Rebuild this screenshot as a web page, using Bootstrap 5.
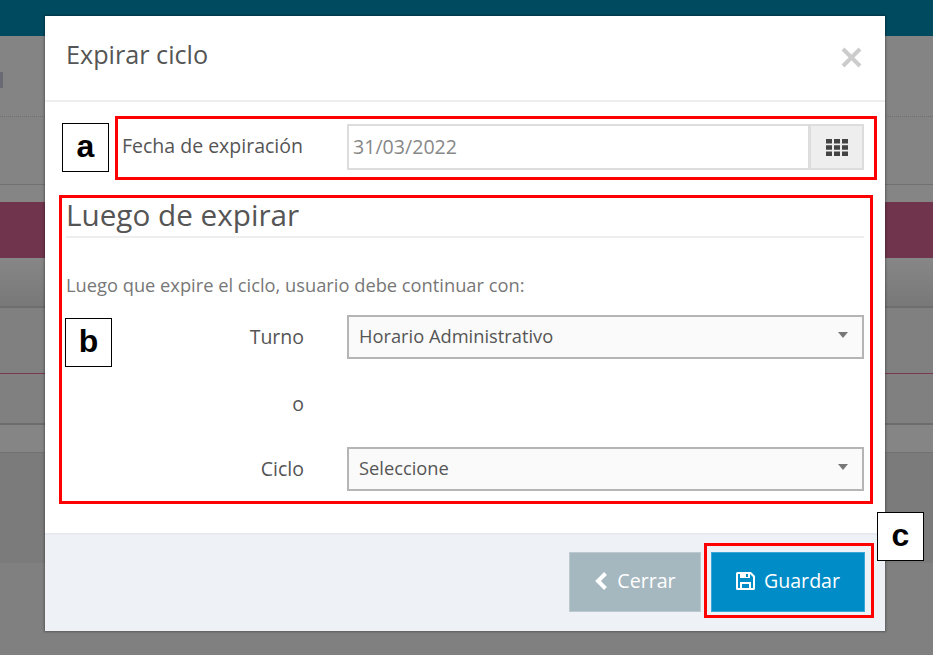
<!DOCTYPE html>
<html lang="es">
<head>
<meta charset="utf-8">
<title>Expirar ciclo</title>
<link href="https://cdn.jsdelivr.net/npm/bootstrap@5.3.0/dist/css/bootstrap.min.css" rel="stylesheet">
<style>
html,body{height:100%;margin:0;overflow:hidden}
body{position:relative;width:933px;height:655px;background:#808080;font-family:"Open Sans","Liberation Sans",sans-serif;color:#555}
.bg-top{height:36px;background:#004a60}
.bg-a{height:81px;background:#848484;border-bottom:1px dotted #6f6f6f;padding-top:36px}
.bg-mark{width:3px;height:16px;background:#6a6a74}
.bg-a2{height:68px;background:#848484;border-bottom:1px solid #707070}
.bg-a3{height:17px;background:#858585}
.bg-maroon{height:56px;background:#70344c}
.bg-b{height:50px;background:linear-gradient(#878787,#787878);border-bottom:2px solid #6e6e6e}
.bg-c{height:66px;background:#808080;border-bottom:1px solid #7a3a50}
.bg-d{height:51px;background:#808080;border-bottom:2px solid #6c6c6c}
.bg-e{height:28px;background:#858585;border-bottom:1px solid #737373}
.bg-f{height:110px;background:#7b7b7b}
.dlg{position:absolute;left:45px;top:16px;width:840px;height:615px;background:#fff;border:0;border-radius:0;box-shadow:0 0 2px 1px rgba(0,0,0,.3)}
.dlg-head{height:86px;padding:0 23px 7px 21px;border-bottom:2px solid #eee;border-radius:0}
.dlg-title{font-size:25.200px;font-weight:400;color:#555;margin:0;line-height:1}
.dlg-x{width:21px;height:21px;margin-top:5px;flex:none}
.dlg-body{padding:22px 21px 0;flex:1}
.lbl{width:281px;flex:none;font-size:19.500px;color:#555;text-align:right;padding-right:43px;margin:0}
.lbl-left{text-align:left;padding-left:56px;padding-right:0;padding-bottom:2px}
.fld{height:46px;border:2px solid #ddd;border-right:0;border-radius:0;background:#fff;font-size:19.600px;color:#888;padding:0 4px 2px;box-shadow:none;font-family:inherit;flex:1;min-width:0}
.addon{width:56px;flex:none;height:46px;background:#eee;border:2px solid #ddd;border-left-width:3px;border-radius:0}
.sect{font-size:29.700px;line-height:33px;font-weight:400;color:#555;margin:28px 0 0;padding-bottom:5px;border-bottom:2px solid #eee}
.hint{font-size:18.300px;color:#777;margin:36px 0 19px;line-height:22px}
.pick{height:44px;flex:1;border:2px solid #b5b5b5;background:#fafafa;font-size:18.300px;color:#555;padding:0 10px 2px;position:relative;display:flex;align-items:center;border-radius:0}
.pick::after{content:"";position:absolute;right:14px;top:15px;border:5px solid transparent;border-top:6px solid #777;border-bottom:0}
.slot{height:88px;padding-top:2px}
.dlg-foot{height:98px;background:#eef2f7;border-top:2px solid #e7ebf1;padding:0 20px 2px 0;border-radius:0}
.act{height:60px;border:1px solid transparent;border-radius:0;color:#fff;font-size:19.600px;font-family:inherit;display:flex;align-items:center;justify-content:center;padding:0 0 3px;gap:9px}
.act-back{width:132px;background:#a5b7bf;border-color:#bccad0;margin-right:10px}
.act-save{width:154px;background:#008cc7;border-color:#3aa6d6}
.act-back:hover{background:#a5b7bf;color:#fff}
.act-save:hover{background:#008cc7;color:#fff}
.box{position:absolute;border:3px solid #f00}
.tag{position:absolute;width:47px;height:49px;background:#fff;border:1px solid #000;font-family:"Liberation Sans",sans-serif;font-weight:700;font-size:32px;line-height:44px;text-align:center;color:#000}
</style>
</head>
<body>
<div class="bg-top"></div>
<div class="bg-a"><div class="bg-mark"></div></div>
<div class="bg-a2"></div>
<div class="bg-a3"></div>
<div class="bg-maroon"></div>
<div class="bg-b"></div>
<div class="bg-c"></div>
<div class="bg-d"></div>
<div class="bg-e"></div>
<div class="bg-f"></div>

<div class="modal-content dlg d-flex flex-column">
  <div class="dlg-head d-flex align-items-center justify-content-between">
    <h5 class="dlg-title">Expirar ciclo</h5>
    <svg class="dlg-x" viewBox="0 0 21 21" aria-label="Cerrar"><path d="M2 2 19 19M19 2 2 19" stroke="#ccc" stroke-width="4" fill="none"/></svg>
  </div>
  <div class="dlg-body">
    <div class="d-flex align-items-center">
      <label class="lbl lbl-left">Fecha de expiración</label>
      <input class="form-control fld" value="31/03/2022" readonly>
      <span class="addon d-flex align-items-center justify-content-center">
        <svg width="22" height="17" viewBox="0 0 22 17" fill="#444"><rect x="0" y="0" width="6" height="4.500"/><rect x="8" y="0" width="6" height="4.500"/><rect x="16" y="0" width="6" height="4.500"/><rect x="0" y="6.250" width="6" height="4.500"/><rect x="8" y="6.250" width="6" height="4.500"/><rect x="16" y="6.250" width="6" height="4.500"/><rect x="0" y="12.500" width="6" height="4.500"/><rect x="8" y="12.500" width="6" height="4.500"/><rect x="16" y="12.500" width="6" height="4.500"/></svg>
      </span>
    </div>
    <h4 class="sect">Luego de expirar</h4>
    <p class="hint">Luego que expire el ciclo, usuario debe continuar con:</p>
    <div class="d-flex align-items-center">
      <label class="lbl">Turno</label>
      <div class="pick">Horario Administrativo</div>
    </div>
    <div class="d-flex align-items-center slot">
      <label class="lbl">o</label>
    </div>
    <div class="d-flex align-items-center">
      <label class="lbl">Ciclo</label>
      <div class="pick">Seleccione</div>
    </div>
  </div>
  <div class="dlg-foot d-flex align-items-center justify-content-end">
    <button class="btn act act-back" type="button">
      <svg width="14" height="18" viewBox="0 0 14 18" fill="none"><path d="M11.500 1.500 4 9l7.500 7.500" stroke="#fff" stroke-width="4"/></svg>Cerrar
    </button>
    <button class="btn act act-save" type="button">
      <svg width="19" height="18" viewBox="0 0 19 18" fill="#fff"><path fill-rule="evenodd" d="M1.500 0H15l4 4v12.500a1.500 1.500 0 0 1-1.500 1.500h-16A1.500 1.500 0 0 1 0 16.500v-15A1.500 1.500 0 0 1 1.500 0zM2 2v14h2v-6h11v6h2V5l-3-3v4H4V2zm4 10v4h7v-4zM10 2v3h2V2z"/></svg>Guardar
    </button>
  </div>
</div>

<div class="box" style="left:115px;top:116px;width:762px;height:64px"></div>
<div class="box" style="left:59px;top:195px;width:814px;height:309px"></div>
<div class="box" style="left:704px;top:543px;width:170px;height:75px"></div>
<div class="tag" style="left:62px;top:123px">a</div>
<div class="tag" style="left:65px;top:318px">b</div>
<div class="tag" style="left:877px;top:512px">c</div>
<script src="https://cdn.jsdelivr.net/npm/bootstrap@5.3.0/dist/js/bootstrap.bundle.min.js"></script>
</body>
</html>
